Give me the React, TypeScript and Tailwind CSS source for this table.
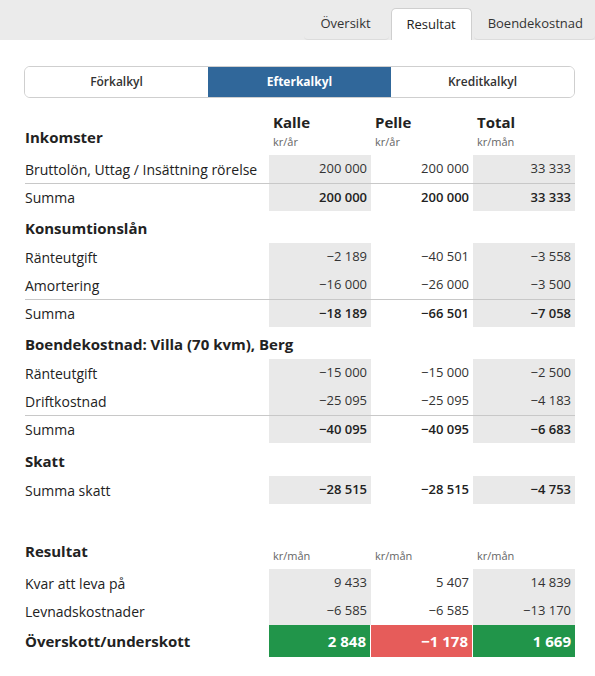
import React from "react";

type Cell = string;

const FONT = "font-['Open_Sans','Noto_Sans',sans-serif]";

function Tabs() {
  return (
    <div className="flex h-[40px] items-end justify-end bg-[#ebebeb]">
      <div className="flex h-[32px] items-center rounded-b-[4px] border-b border-[#dcdcdc] pr-[18px] pl-[16px] text-[13px] text-[#333]">
        Översikt
      </div>
      <div className="mx-[2px] flex h-[32px] w-[81px] items-center justify-center rounded-t-[5px] border border-b-0 border-[#cfcfcf] bg-white text-[13px] text-[#222]">
        Resultat
      </div>
      <div className="flex h-[32px] items-center rounded-b-[4px] border-b border-[#dcdcdc] pr-[12px] pl-[14px] text-[13px] text-[#333]">
        Boendekostnad
      </div>
    </div>
  );
}

function Segmented() {
  const items = ["Förkalkyl", "Efterkalkyl", "Kreditkalkyl"];
  return (
    <div className="mt-[26px] ml-[24px] grid h-[32px] w-[551px] grid-cols-3 overflow-hidden rounded-[6px] border border-[#cfcfcf]">
      {items.map((t) => (
        <div
          key={t}
          className={
            t === "Efterkalkyl"
              ? "flex items-center justify-center bg-[#30679a] text-[12px] font-bold text-white"
              : "flex items-center justify-center bg-white text-[12px] font-semibold text-[#333]"
          }
        >
          {t}
        </div>
      ))}
    </div>
  );
}

function Heading({ label, h = "h-[32px]" }: { label: string; h?: string }) {
  return (
    <div className={`col-span-4 flex items-end pb-[4px] ${h}`}>
      <span className="text-[15px] font-bold text-[#222]">{label}</span>
    </div>
  );
}

function Row({
  label,
  values,
  bold,
  line,
}: {
  label: string;
  values: Cell[];
  bold?: boolean;
  line?: boolean;
}) {
  const b = line ? "border-t border-[#c8c8c8]" : "";
  const w = bold ? "font-semibold text-[#222]" : "text-[#333]";
  return (
    <>
      <div className={`flex h-[28px] items-center text-[14px] text-[#222] ${b}`}>{label}</div>
      {values.map((v, i) => (
        <div
          key={i}
          className={`flex h-[28px] items-center justify-end pr-[4px] text-[13px] ${w} ${b} ${
            i === 1 ? "" : "bg-[#e9e9e9]"
          }`}
        >
          {v}
        </div>
      ))}
    </>
  );
}

export default function App() {
  return (
    <div className={`min-h-[676px] w-[595px] bg-white ${FONT}`}>
      <Tabs />
      <Segmented />

      <div className="mx-[25px] mt-[12px] grid w-[550px] grid-cols-[244px_102px_102px_102px]">
        {/* column headers */}
        <div className="flex h-[45px] items-end pb-[7px]">
          <span className="text-[15px] font-bold text-[#222]">Inkomster</span>
        </div>
        {[
          ["Kalle", "kr/år"],
          ["Pelle", "kr/år"],
          ["Total", "kr/mån"],
        ].map(([n, u]) => (
          <div key={n} className="flex h-[45px] flex-col justify-end pb-[4px] pl-[4px]">
            <span className="text-[15px] leading-[22px] font-bold text-[#222]">{n}</span>
            <span className="text-[11px] leading-[18px] text-[#666]">{u}</span>
          </div>
        ))}

        <Row label="Bruttolön, Uttag / Insättning rörelse" values={["200 000", "200 000", "33 333"]} />
        <Row label="Summa" values={["200 000", "200 000", "33 333"]} bold line />

        <Heading label="Konsumtionslån" />
        <Row label="Ränteutgift" values={["−2 189", "−40 501", "−3 558"]} />
        <Row label="Amortering" values={["−16 000", "−26 000", "−3 500"]} />
        <Row label="Summa" values={["−18 189", "−66 501", "−7 058"]} bold line />

        <Heading label="Boendekostnad: Villa (70 kvm), Berg" />
        <Row label="Ränteutgift" values={["−15 000", "−15 000", "−2 500"]} />
        <Row label="Driftkostnad" values={["−25 095", "−25 095", "−4 183"]} />
        <Row label="Summa" values={["−40 095", "−40 095", "−6 683"]} bold line />

        <Heading label="Skatt" h="h-[33px]" />
        <Row label="Summa skatt" values={["−28 515", "−28 515", "−4 753"]} bold />

        <div className="col-span-4 h-[30px]" />

        <div className="flex h-[35px] items-center">
          <span className="text-[15px] font-bold text-[#222]">Resultat</span>
        </div>
        {["kr/mån", "kr/mån", "kr/mån"].map((u, i) => (
          <div key={i} className="flex h-[35px] items-center pt-[10px] pl-[4px] text-[11px] text-[#666]">
            {u}
          </div>
        ))}
        <Row label="Kvar att leva på" values={["9 433", "5 407", "14 839"]} />
        <Row label="Levnadskostnader" values={["−6 585", "−6 585", "−13 170"]} />

        <div className="flex h-[32px] items-center text-[15px] font-bold text-[#222]">
          Överskott/underskott
        </div>
        <div className="flex h-[32px] items-center justify-end border-r border-white bg-[#21954a] pr-[4px] text-[15px] font-bold text-white">
          2 848
        </div>
        <div className="flex h-[32px] items-center justify-end border-r border-white bg-[#e65c5a] pr-[4px] text-[15px] font-bold text-white">
          −1 178
        </div>
        <div className="flex h-[32px] items-center justify-end bg-[#21954a] pr-[4px] text-[15px] font-bold text-white">
          1 669
        </div>
      </div>
    </div>
  );
}
